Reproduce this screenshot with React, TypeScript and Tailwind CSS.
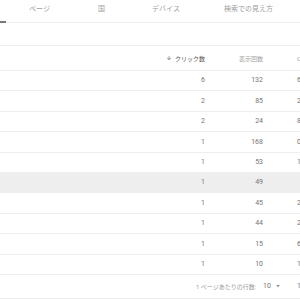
import React from "react";

const rows: [number, number, string][] = [
  [6, 132, "6"],
  [2, 85, "2"],
  [2, 24, "8"],
  [1, 168, "0"],
  [1, 53, "1"],
  [1, 49, ""],
  [1, 45, "2"],
  [1, 44, "2"],
  [1, 15, "6"],
  [1, 10, "1"],
];

export default function App() {
  return (
    <div className="w-[300px] h-[300px] overflow-hidden bg-white font-['Roboto','Noto_Sans_CJK_JP',sans-serif]">
      {/* Tabs */}
      <div className="flex h-[23px] border-b border-[#eeeeee] text-[7px] text-[#a0a0a0]">
        <div className="w-[6px] shrink-0 h-full flex flex-col justify-end">
          <div className="h-[2px] bg-[#777777] translate-y-[1px]" />
        </div>
        <div className="w-[67px] shrink-0 text-center pt-[4px]">ページ</div>
        <div className="w-[57px] shrink-0 text-center pt-[4px]">国</div>
        <div className="w-[72px] shrink-0 text-center pt-[4px]">デバイス</div>
        <div className="w-[93px] shrink-0 text-center pt-[4px]">検索での見え方</div>
      </div>
      {/* Filter row */}
      <div className="h-[23px] border-b border-[#eeeeee]" />
      {/* Header */}
      <div className="flex items-center h-[25px] border-b border-[#eeeeee] text-[6px]">
        <div className="w-[150px] shrink-0" />
        <div className="w-[55px] shrink-0 flex items-center justify-end gap-[3px] text-[#555555]">
          <svg width="6" height="6" viewBox="0 0 24 24" fill="#555555">
            <path d="M20 12l-1.41-1.41L13 16.17V4h-2v12.17l-5.58-5.59L4 12l8 8 8-8z" />
          </svg>
          <span>クリック数</span>
        </div>
        <div className="w-[58px] shrink-0 text-right text-[#a0a0a0]">表示回数</div>
        <div className="w-[34px] shrink-0" />
        <div className="w-[40px] shrink-0 text-[#a0a0a0]">CTR</div>
      </div>
      {/* Rows */}
      {rows.map(([c, i, t], idx) => (
        <div
          key={idx}
          className={`flex items-center h-[20.4px] border-b border-[#eeeeee] text-[7px] text-[#757575] ${
            idx === 5 ? "bg-[#eeeeee]" : ""
          }`}
        >
          <div className="w-[150px] shrink-0" />
          <div className="w-[55px] shrink-0 text-right">{c}</div>
          <div className="w-[58px] shrink-0 text-right">{i}</div>
          <div className="w-[34px] shrink-0" />
          <div className="w-[40px] shrink-0">{t}</div>
        </div>
      ))}
      {/* Footer */}
      <div className="flex items-center h-[24px] border-b border-[#eeeeee] text-[6px] text-[#9a9a9a]">
        <div className="w-[196px] shrink-0" />
        <div className="w-[62px] shrink-0 whitespace-nowrap">1 ページあたりの行数:</div>
        <div className="w-[5px] shrink-0" />
        <div className="w-[12px] shrink-0 text-[7px] text-[#757575]">10</div>
        <div className="w-[22px] shrink-0 flex items-center">
          <svg width="6" height="6" viewBox="0 0 10 10" fill="#8a8a8a">
            <path d="M2 3.5h6L5 7z" />
          </svg>
        </div>
        <div className="shrink-0 whitespace-nowrap text-[7px] text-[#757575]">1-10</div>
      </div>
    </div>
  );
}
